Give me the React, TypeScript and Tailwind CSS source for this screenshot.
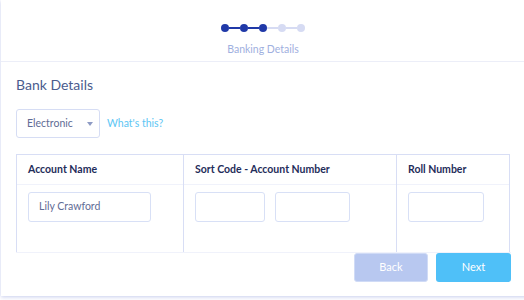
export default function App() {
  return (
    <div className="h-[300px] w-[524px] overflow-hidden bg-white" style={{ fontFamily: "Lato, 'Open Sans', sans-serif" }}>
      <div className="ml-px h-[296px] w-[540px] bg-white shadow-[0_1px_4px_rgba(70,90,200,0.3)]">
        {/* Stepper */}
        <div className="flex flex-col items-center border-b border-[#eceef8] pt-[24px] pb-[5px] pr-[16px]">
          <div className="flex items-center">
            <Dot active />
            <Line active />
            <Dot active />
            <Line active />
            <Dot active />
            <Line />
            <Dot />
            <Line />
            <Dot />
          </div>
          <p className="mt-[10px] text-[10.5px] leading-[14px] text-[#9fb0e0]">Banking Details</p>
        </div>

        <div className="px-[15px]">
          <h2 className="mt-[13px] text-[14px] leading-[20px] text-[#4b5c8e]">Bank Details</h2>

          <div className="mt-[14px] flex items-center gap-[7px]">
            <div className="flex h-[29px] w-[84px] items-center justify-between rounded-[3px] border border-[#d6ddf4] pl-[10px] pr-[6px]">
              <span className="text-[10.5px] text-[#5f6c95]">Electronic</span>
              <svg width="6" height="4" viewBox="0 0 6 4">
                <path d="M0 0h6L3 4z" fill="#8e9bc4" />
              </svg>
            </div>
            <span className="text-[10.5px] text-[#5cc6f4]">What&apos;s this?</span>
          </div>

          <div className="mt-[16px] grid w-[494px] grid-cols-[167px_213px_1fr] border border-b-0 border-[#d8def5]">
            <Cell title="Account Name" border>
              <Input w="w-[123px]" value="Lily Crawford" />
            </Cell>
            <Cell title="Sort Code - Account Number" border>
              <div className="flex gap-[10px]">
                <Input w="w-[70px]" />
                <Input w="w-[75px]" />
              </div>
            </Cell>
            <Cell title="Roll Number">
              <Input w="w-[76px]" />
            </Cell>
          </div>

          <div className="flex w-[495px] justify-end gap-[8px] border-t border-[#f0f2fb]">
            <button className="h-[29px] w-[74px] rounded-[3px] border border-[#d0dbf6] bg-[#b8c8f0] text-[11px] text-white">
              Back
            </button>
            <button className="h-[29px] w-[75px] rounded-[3px] bg-[#4fc0f8] text-[11px] text-white">Next</button>
          </div>
        </div>
      </div>
    </div>
  );
}

function Dot({ active }: { active?: boolean }) {
  return <div className={`h-[8px] w-[8px] rounded-full ${active ? "bg-[#2039a8]" : "bg-[#d6dbf3]"}`} />;
}

function Line({ active }: { active?: boolean }) {
  return <div className={`h-[2px] w-[11px] ${active ? "bg-[#2039a8]" : "bg-[#d6dbf3]"}`} />;
}

function Cell({ title, border, children }: { title: string; border?: boolean; children: React.ReactNode }) {
  return (
    <div className={`h-[97px] ${border ? "border-r border-[#d8def5]" : ""}`}>
      <div className="flex h-[30px] items-center border-b border-[#f0f2fb] px-[11px] text-[10.5px] font-bold text-[#1f2d5a]">
        {title}
      </div>
      <div className="px-[11px] pt-[7px]">{children}</div>
    </div>
  );
}

function Input({ w, value }: { w: string; value?: string }) {
  return (
    <div className={`flex h-[30px] ${w} items-center rounded-[3px] border border-[#d8e0f6] px-[10px] text-[10.5px] text-[#5f6c95]`}>
      {value}
    </div>
  );
}
